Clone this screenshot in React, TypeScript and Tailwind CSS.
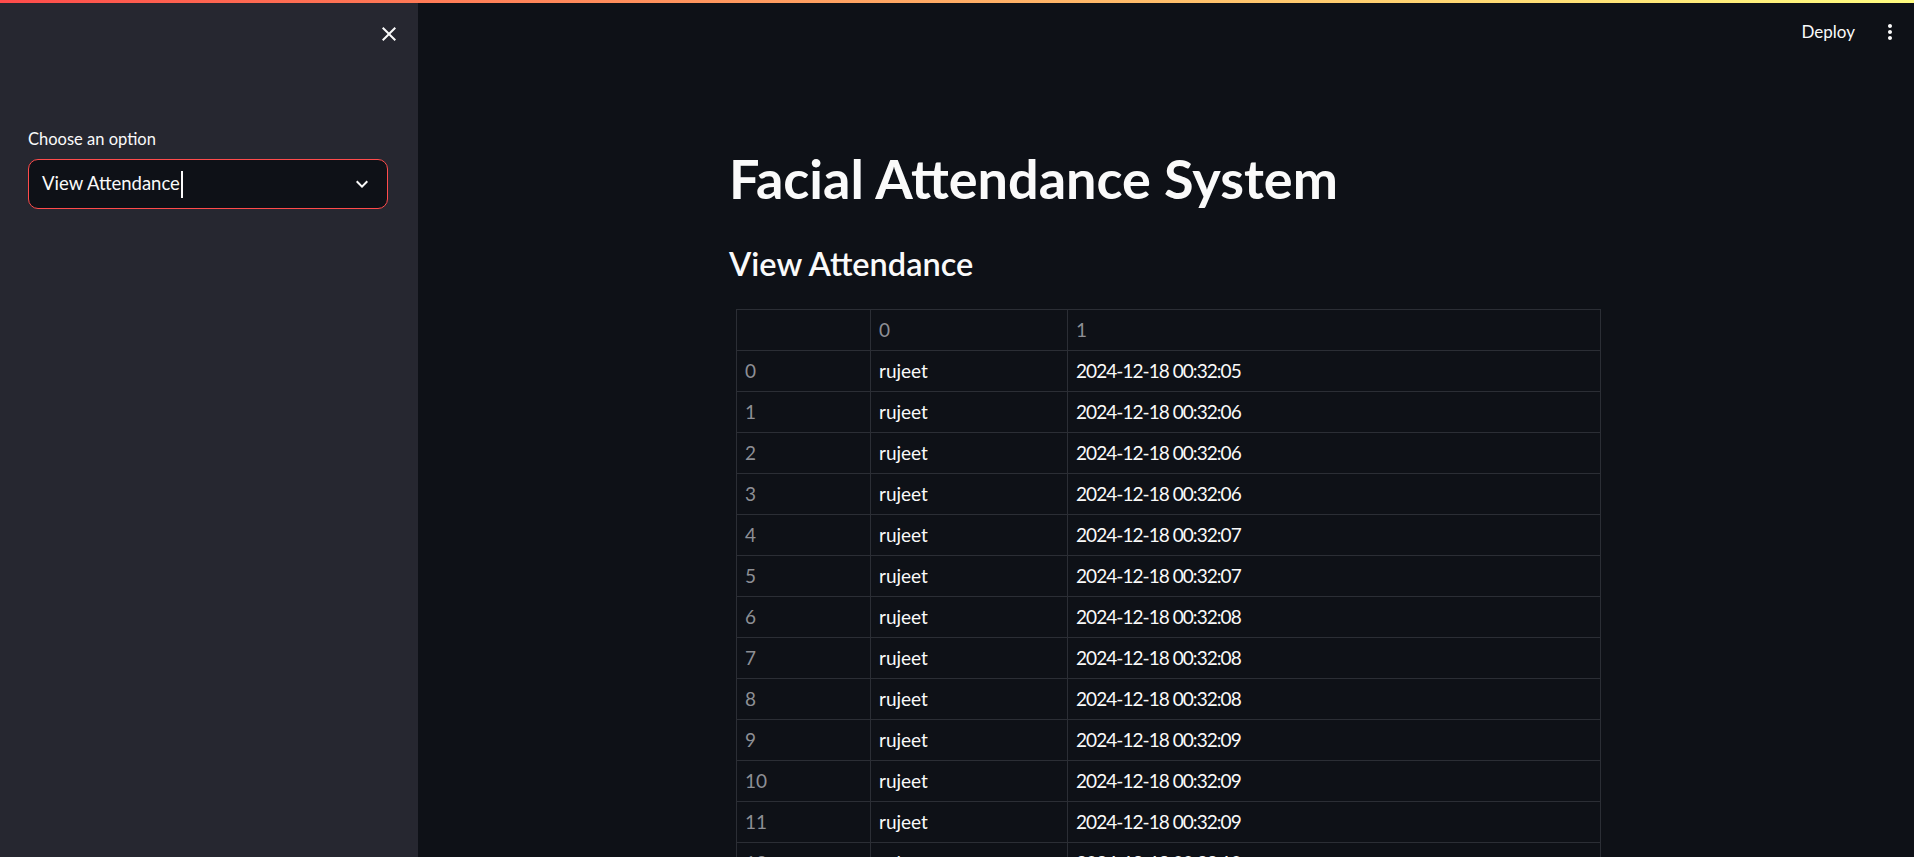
import React from 'react';

const rows: [string, string][] = [
    ['rujeet', '2024-12-18 00:32:05'],
    ['rujeet', '2024-12-18 00:32:06'],
    ['rujeet', '2024-12-18 00:32:06'],
    ['rujeet', '2024-12-18 00:32:06'],
    ['rujeet', '2024-12-18 00:32:07'],
    ['rujeet', '2024-12-18 00:32:07'],
    ['rujeet', '2024-12-18 00:32:08'],
    ['rujeet', '2024-12-18 00:32:08'],
    ['rujeet', '2024-12-18 00:32:08'],
    ['rujeet', '2024-12-18 00:32:09'],
    ['rujeet', '2024-12-18 00:32:09'],
    ['rujeet', '2024-12-18 00:32:09'],
    ['rujeet', '2024-12-18 00:32:10'],
];

const font = { fontFamily: 'Lato, "Noto Sans", sans-serif' };

function Sidebar() {
    return (
        <aside className="w-[418px] shrink-0 bg-[#262730] flex flex-col px-[28px]">
            <div className="h-[68px] flex items-center justify-end -mr-[11px]">
                <svg viewBox="0 0 24 24" className="w-[24px] h-[24px]" fill="#fafafa">
                    <path d="M19 6.41 17.59 5 12 10.59 6.41 5 5 6.41 10.59 12 5 17.59 6.41 19 12 13.41 17.59 19 19 17.59 13.41 12z" />
                </svg>
            </div>
            <label className="mt-[59px] mb-[8px] h-[24px] leading-[24px] text-[16.5px] text-[#fafafa]">Choose an option</label>
            <div className="h-[50px] w-[360px] rounded-[10px] border border-[#ff4b4b] bg-[#0e1117] flex items-center pl-[13px] pr-[13px]">
                <span className="text-[18.5px] text-[#fafafa]">View Attendance</span>
                <span className="ml-[1px] w-[2px] h-[27px] bg-[#fafafa]" />
                <svg viewBox="0 0 24 24" className="ml-auto w-[24px] h-[24px]" fill="#fafafa">
                    <path d="M16.59 8.59 12 13.17 7.41 8.59 6 10l6 6 6-6z" />
                </svg>
            </div>
        </aside>
    );
}

function AttendanceTable() {
    const cell = 'border border-[#2b2e35] px-[8px] leading-[40px] text-left font-normal';
    return (
        <table className="ml-[7px] w-[864px] table-fixed border-collapse text-[19px]">
            <colgroup>
                <col className="w-[134px]" />
                <col className="w-[197px]" />
                <col className="w-[533px]" />
            </colgroup>
            <thead>
                <tr className="text-[#8d8f95]">
                    <th className={cell}></th>
                    <th className={cell}>0</th>
                    <th className={cell}>1</th>
                </tr>
            </thead>
            <tbody>
                {rows.map(([name, time], i) => (
                    <tr key={i}>
                        <td className={cell + ' text-[#8d8f95]'}>{i}</td>
                        <td className={cell + ' text-[#fafafa]'}>{name}</td>
                        <td className={cell + ' text-[#fafafa] tracking-[-0.95px]'}>{time}</td>
                    </tr>
                ))}
            </tbody>
        </table>
    );
}

export default function App() {
    return (
        <div className="relative flex h-[857px] w-full overflow-hidden bg-[#0e1117]" style={font}>
            <div className="absolute left-0 right-0 top-0 h-[3px] bg-gradient-to-r from-[#ff4b4b] to-[#fffd80]" />
            <Sidebar />
            <main className="flex-1 flex flex-col">
                <div className="h-[63px] shrink-0 flex items-center justify-end pr-[12px]">
                    <span className="text-[17px] text-[#fafafa]">Deploy</span>
                    <svg viewBox="0 0 24 24" className="ml-[23px] w-[24px] h-[24px]" fill="#fafafa">
                        <path d="M12 8c1.1 0 2-.9 2-2s-.9-2-2-2-2 .9-2 2 .9 2 2 2zm0 2c-1.1 0-2 .9-2 2s.9 2 2 2 2-.9 2-2-.9-2-2-2zm0 6c-1.1 0-2 .9-2 2s.9 2 2 2 2-.9 2-2-.9-2-2-2z" />
                    </svg>
                </div>
                <div className="mx-auto w-[874px] flex flex-col">
                    <h1 className="mt-[84px] text-[54px] leading-[1.2] font-bold text-[#fafafa]">Facial Attendance System</h1>
                    <h3 className="mt-[32px] text-[32.5px] leading-[1.2] font-semibold text-[#fafafa]">View Attendance</h3>
                    <div className="mt-[26px]">
                        <AttendanceTable />
                    </div>
                </div>
            </main>
        </div>
    );
}
